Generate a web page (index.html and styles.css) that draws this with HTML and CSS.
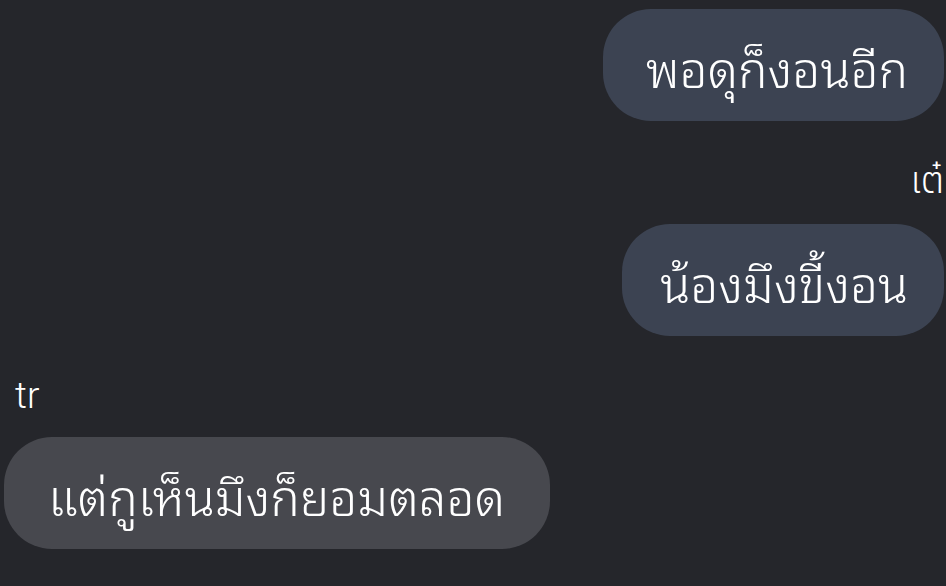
FILE: index.html
```html
<!DOCTYPE html>
<html lang="th">
<head>
<meta charset="utf-8">
<link rel="stylesheet" href="styles.css">
</head>
<body>
<div class="chat">
  <div class="row out">
    <div class="bubble mine first">พอดุก็งอนอีก</div>
  </div>
  <div class="name right">เต๋</div>
  <div class="row out">
    <div class="bubble mine second">น้องมึงขี้งอน</div>
  </div>
  <div class="name left">tr</div>
  <div class="row in">
    <div class="bubble theirs">แต่กูเห็นมึงก็ยอมตลอด</div>
  </div>
</div>
</body>
</html>
```
FILE: styles.css
```css
html, body {
  margin: 0;
  padding: 0;
  background: #25262b;
  width: 946px;
  height: 586px;
  overflow: hidden;
}
.chat {
  display: flex;
  flex-direction: column;
  font-family: "Noto Sans Thai Looped", "Noto Sans Thai", "Roboto", "Noto Sans", sans-serif;
  color: #ffffff;
}
.row {
  display: flex;
}
.row.out {
  justify-content: flex-end;
  padding-right: 2px;
}
.row.in {
  justify-content: flex-start;
  padding-left: 4px;
  margin-top: 21px;
}
.bubble {
  height: 112px;
  box-sizing: border-box;
  border-radius: 48px;
  display: flex;
  align-items: center;
  font-size: 49.5px;
  font-weight: 300;
  padding: 0 36px 0 43px;
}
.mine {
  background: #3c4352;
}
.second {
  margin-top: 23px;
  padding-left: 38px;
}
.theirs {
  background: #47484e;
  padding: 0 45px 0 44px;
}
.first {
  margin-top: 9px;
}
.name {
  font-family: "Roboto", "Noto Sans Thai", sans-serif;
  font-size: 37px;
  font-weight: 300;
  line-height: 40px;
}
.name.right {
  align-self: flex-end;
  margin-top: 40px;
  margin-right: 2px;
}
.name.left {
  padding-left: 15px;
  margin-top: 40px;
}
```
